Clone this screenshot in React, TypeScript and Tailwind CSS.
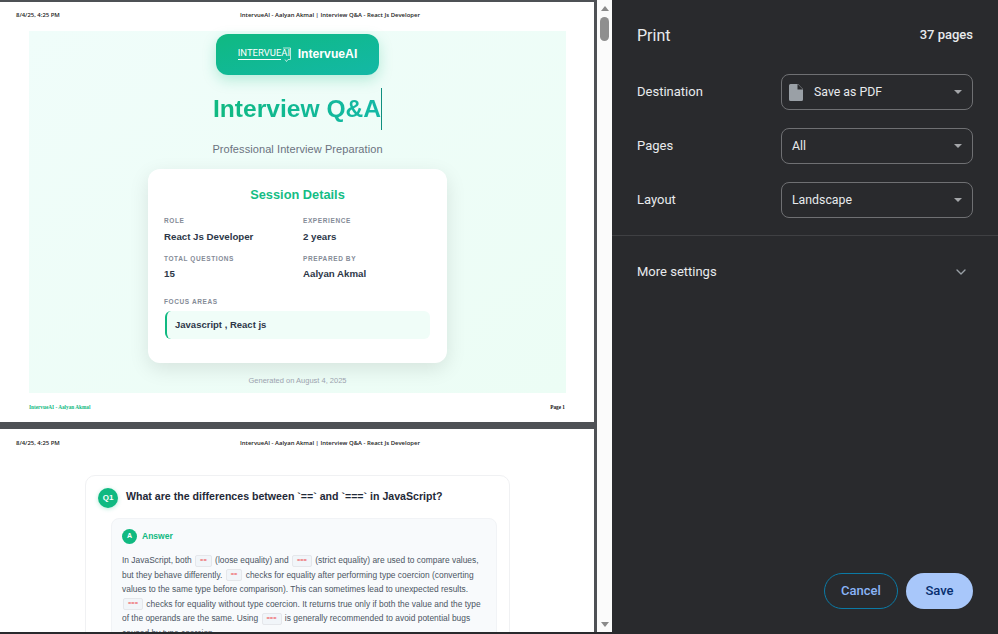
import { ChevronDown } from "lucide-react";

const SANS = "font-['Liberation_Sans',Arial,sans-serif]";

function PageHeader() {
  return (
    <div className="relative h-[9px] text-[5.95px] leading-[9px] text-[#222] font-['Open_Sans',sans-serif] font-semibold">
      <span className="absolute left-[16px] top-0">8/4/25, 4:25 PM</span>
      <div className="text-center pl-[66px]">IntervueAI - Aalyan Akmal | Interview Q&amp;A - React Js Developer</div>
    </div>
  );
}

function LogoMark() {
  return (
    <div className="relative w-[54px] h-[16px] text-white">
      <span className="block text-[9.5px] leading-[12px] font-['Roboto',sans-serif] border-b border-white w-[43px] whitespace-nowrap">
        INTERVUEAI
      </span>
      <svg className="absolute left-[44px] top-0" width="10" height="17" viewBox="0 0 10 17" fill="none" stroke="white" strokeWidth="0.7">
        <path d="M1 1h7.5v11.5H6L4.5 14.5 3 12.5" />
      </svg>
    </div>
  );
}

function Label({ children }: { children: string }) {
  return <div className="text-[6.5px] leading-[8px] font-bold tracking-[0.6px] uppercase text-[#858b97]">{children}</div>;
}

function Field({ label, value, tight }: { label: string; value: string; tight?: boolean }) {
  return (
    <div>
      <Label>{label}</Label>
      <div className={`${tight ? "mt-[6px]" : "mt-[7px]"} text-[9.7px] leading-[10px] font-bold text-[#2d3748]`}>{value}</div>
    </div>
  );
}

function Code({ children }: { children: string }) {
  return (
    <span className="inline-block h-[12px] leading-[10px] align-middle mx-[1px] px-[4px] rounded-[2px] bg-[#f1f5f9] border border-[#e5e7eb] text-[5.5px] font-['Liberation_Mono',monospace] font-bold text-[#ef4444]">
      {children}
    </span>
  );
}

function Select({ children }: { children: React.ReactNode }) {
  return (
    <div className="flex items-center w-[192px] h-[36px] pl-[10px] pr-[10px] rounded-[8px] border border-[#6f7073] text-[12.3px] text-[#e8eaed]">
      {children}
      <span className="ml-auto w-0 h-0 border-x-[4px] border-x-transparent border-t-[4px] border-t-[#a4a6a9]" />
    </div>
  );
}

function SettingRow({ label, children }: { label: string; children: React.ReactNode }) {
  return (
    <div className="flex items-center justify-between h-[36px]">
      <span className="text-[13px] text-[#e8eaed]">{label}</span>
      {children}
    </div>
  );
}

export default function App() {
  return (
    <div className="flex w-[998px] h-[634px] overflow-hidden bg-[#292a2d]">
      {/* preview pane */}
      <div className="w-[597px] h-[632px] overflow-hidden bg-[#4e5155] pt-[2px] pr-[3px]">
        <div className={`h-[420px] bg-white pt-[9px] ${SANS}`}>
          <PageHeader />
          <div className="ml-[29px] mr-[28px] mt-[11px] h-[362px] pt-[3px] bg-gradient-to-br from-[#f0fdfa] to-[#ecfdf5] flex flex-col items-center">
            <div className="flex items-center justify-center gap-[6px] w-[163px] h-[41px] rounded-[12px] bg-gradient-to-br from-[#10b981] to-[#14b8a6] shadow-[0_5px_14px_rgba(16,185,129,0.25)]">
              <LogoMark />
              <span className="text-[12.2px] font-bold text-white">IntervueAI</span>
            </div>
            <div className="mt-[13px] h-[42px] flex items-center border-r border-[#0f8f80]">
              <h1 className="text-[24.6px] leading-[42px] font-bold text-transparent bg-clip-text bg-gradient-to-r from-[#10b981] to-[#14b8a6]">Interview Q&amp;A</h1>
            </div>
            <p className="mt-[12px] text-[11px] leading-[14px] tracking-[0.08px] text-[#6b7280]">Professional Interview Preparation</p>
            <div className="mt-[13px] w-[299px] h-[194px] rounded-[12px] bg-white pt-[18px] px-[16px] shadow-[0_6px_20px_rgba(0,0,0,0.1)]">
              <h2 className="text-center text-[12.8px] leading-[16px] font-bold text-[#14bd85]">Session Details</h2>
              <div className="grid grid-cols-[139px_1fr] gap-y-[13px] mt-[14px]">
                <Field label="Role" value="React Js Developer" />
                <Field label="Experience" value="2 years" />
                <Field label="Total Questions" value="15" tight />
                <Field label="Prepared By" value="Aalyan Akmal" tight />
              </div>
              <div className="mt-[19px]">
                <Label>Focus Areas</Label>
              </div>
              <div className="mt-[5px] ml-[1px] mr-[1px] flex items-center h-[28px] pl-[8px] rounded-[6px] border-l-2 border-[#10b981] bg-[#f0fdf8] text-[9.5px] font-bold text-[#2d3748]">
                Javascript , React js
              </div>
            </div>
            <p className="mt-[13px] text-[7.5px] leading-[10px] text-[#9ca3af]">Generated on August 4, 2025</p>
          </div>
          <div className="ml-[29px] mr-[29px] mt-[10px] flex justify-between text-[5.25px] leading-[8px] font-['Liberation_Serif',serif] font-bold">
            <span className="text-[#10b981]">IntervueAI - Aalyan Akmal</span>
            <span className="text-[#111]">Page 1</span>
          </div>
        </div>

        <div className={`h-[210px] mt-[7px] bg-white pt-[10px] overflow-hidden ${SANS}`}>
          <PageHeader />
          <div className="mx-[85px] mt-[27px] w-[425px] h-[300px] rounded-[10px] border border-[#f0f1f3] pt-[12px] px-[12px]">
            <div className="flex items-center gap-[8px] h-[20px]">
              <span className="flex items-center justify-center w-[20px] h-[20px] rounded-full bg-[#10b981] text-white text-[8px] font-bold shadow-[0_1px_4px_rgba(16,185,129,0.3)]">Q1</span>
              <span className="text-[10.6px] leading-[14px] font-bold text-[#1f2937] -mt-[4px]">What are the differences between `==` and `===` in JavaScript?</span>
            </div>
            <div className="ml-[13px] mt-[10px] w-[386px] h-[200px] rounded-[8px] border border-[#f1f3f6] bg-[#f8fafc] pt-[9px] px-[10px]">
              <div className="flex items-center gap-[5px] h-[16px]">
                <span className="flex items-center justify-center w-[15px] h-[15px] rounded-full bg-[#10b981] text-white text-[7px] font-bold">A</span>
                <span className="text-[8.5px] font-bold text-[#10b981]">Answer</span>
              </div>
              <div className="mt-[9px] text-[8.4px] leading-[14.5px] tracking-[0.02px] text-[#4b5563] whitespace-nowrap">
                <div>In JavaScript, both <Code>==</Code> (loose equality) and <Code>===</Code> (strict equality) are used to compare values,</div>
                <div>but they behave differently. <Code>==</Code> checks for equality after performing type coercion (converting</div>
                <div>values to the same type before comparison). This can sometimes lead to unexpected results.</div>
                <div><Code>===</Code> checks for equality without type coercion. It returns true only if both the value and the type</div>
                <div>of the operands are the same. Using <Code>===</Code> is generally recommended to avoid potential bugs</div>
                <div>caused by type coercion.</div>
              </div>
            </div>
          </div>
        </div>
      </div>

      {/* scrollbar */}
      <div className="flex flex-col items-center w-[15px] h-[632px] bg-[#fbfbfb]">
        <span className="mt-[6px] w-0 h-0 border-x-[4.5px] border-x-transparent border-b-[5px] border-b-[#8a8a8a]" />
        <span className="mt-[6px] w-[9px] h-[24px] rounded-full bg-[#8f8f8f]" />
        <span className="mt-auto mb-[5px] w-0 h-0 border-x-[4.5px] border-x-transparent border-t-[5px] border-t-[#8a8a8a]" />
      </div>

      {/* print settings */}
      <aside className="relative flex-1 flex flex-col h-full bg-[#292a2d] font-['Roboto',sans-serif] text-[#e8eaed]">
        <div className="flex items-center justify-between h-[34px] mt-[18px] pl-[25px] pr-[25px]">
          <span className="text-[16px] mt-[1px]">Print</span>
          <span className="text-[13px] font-medium">37 pages</span>
        </div>
        <div className="flex flex-col gap-[18px] mt-[22px] pl-[25px] pr-[25px]">
          <SettingRow label="Destination">
            <Select>
              <svg className="-ml-[3px] mr-[11px]" width="14" height="17" viewBox="0 0 14 17" fill="#9aa0a6">
                <path d="M1.5 0H9l5 5v10.5a1.5 1.5 0 0 1-1.5 1.5h-11A1.5 1.5 0 0 1 0 15.5v-14A1.5 1.5 0 0 1 1.5 0z" />
                <path d="M8.5 0v5.5H14" fill="#292a2d" />
              </svg>
              Save as PDF
            </Select>
          </SettingRow>
          <SettingRow label="Pages">
            <Select>All</Select>
          </SettingRow>
          <SettingRow label="Layout">
            <Select>Landscape</Select>
          </SettingRow>
        </div>
        <div className="mt-[17px] border-t border-[#3f4043]" />
        <div className="flex items-center justify-between h-[36px] mt-[18px] pl-[25px] pr-[29px]">
          <span className="text-[13px]">More settings</span>
          <ChevronDown size={16} strokeWidth={2} className="text-[#9aa0a6]" />
        </div>
        <div className="flex justify-end gap-[8px] mt-auto mb-[25px] pr-[25px]">
          <button className="w-[74px] h-[36px] rounded-full border border-[#0b7aa5] text-[13px] font-medium text-[#8ab4f8]">Cancel</button>
          <button className="w-[67px] h-[36px] rounded-full bg-[#a8c7fa] text-[13px] font-medium text-[#062e6f]">Save</button>
        </div>
      </aside>
    </div>
  );
}
